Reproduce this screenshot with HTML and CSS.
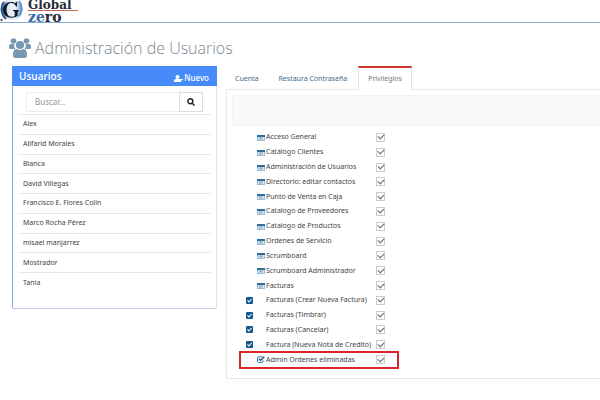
FILE: index.html
```html
<!DOCTYPE html>
<html lang="es">
<head>
<meta charset="utf-8">
<title>Administración de Usuarios</title>
<link rel="stylesheet" href="styles.css">
</head>
<body>
<svg class="defs" aria-hidden="true">
  <symbol id="window" viewBox="0 0 8 7"><rect y="1" width="8" height="6" fill="#9dbbd0"/><rect y="1" width="8" height="2" fill="#2f6d9b"/><rect x="1" y="3" width="6" height="3" fill="#d5e4ee"/><path d="M2 4h4M2 5h3" stroke="#5689ad" stroke-width=".6"/></symbol>
  <symbol id="square-check" viewBox="0 0 7 7"><rect width="7" height="7" rx="1" fill="#17588c"/><path d="M1.500 3.400 3 5 5.600 2" fill="none" stroke="#fff" stroke-width="1.100"/></symbol>
  <symbol id="check-edit" viewBox="0 0 8 7"><path d="M5.500.8H1.300Q.6.8.6 1.500v4q0 .8.7.8h4q.8 0 .8-.8V4.300" fill="none" stroke="#2f6d9b"/><path d="M2 2.800 3.500 4.300 7.300.8" fill="none" stroke="#17588c" stroke-width="1.300"/></symbol>
</svg>
<header class="topbar">
  <svg class="emblem" viewBox="0 0 24 22" role="img" aria-label="Global Zero">
    <defs><linearGradient id="globe"><stop offset="0" stop-color="#2d63a6"/><stop offset=".3" stop-color="#dce9f5"/><stop offset=".65" stop-color="#eef5fb"/><stop offset="1" stop-color="#5f93cb"/></linearGradient></defs>
    <circle cx="12" cy="9.500" r="10.500" fill="url(#globe)"/>
    <path d="M4 2C0 6 1 15 6 19" fill="none" stroke="#24599c" stroke-width="2"/>
    <path d="M19 1c3 4 4 10 0 15" fill="none" stroke="#5f93cb" stroke-width="2"/>
    <path d="M17 6.500h-1C15 4 13.500 3 11.500 3 8.500 3 6.500 5.500 6.500 9.700s2 7 5 7c1.500 0 2.500-.4 3.200-1v-3.500q0-1.200-1.700-1.200v-.9h6v.9q-1.300 0-1.300 1.200v3.600c-1.600 1.200-3.700 1.900-6.200 1.900C6.800 17.700 3 14.800 3 10s3.600-8 8.300-8c1.700 0 3 .6 4 1l.8-.9h.9z" fill="#151a25"/>
    <circle cx="1.500" cy="20" r="1" fill="#222"/>
  </svg>
  <div class="brand">
    <span class="brand-top">Global</span>
    <span class="brand-bottom"><span class="brand-blue">ze</span>ro</span>
  </div>
</header>
<h1 class="title">
  <svg class="users" viewBox="0 0 22 20" aria-hidden="true" fill="#7698b3"><circle cx="4.500" cy="3" r="2.800"/><circle cx="17.500" cy="3" r="2.800"/><path d="M0 10V8q0-2 2-2h3.500Q4.500 9 6.500 11H1Q0 11 0 10M22 10V8q0-2-2-2h-3.500q1 3-1 5H21q1 0 1-1"/><circle cx="11" cy="7" r="4.100"/><path d="M4 17q0-6 3.500-6 3.500 2.200 7 0Q18 11 18 17q0 3-2.500 3h-9Q4 20 4 17"/></svg>
  Administración de Usuarios
</h1>
<main class="layout">
  <section class="panel">
    <div class="panel-head">
      <h2>Usuarios</h2>
      <button class="new" type="button"><svg class="person" viewBox="0 0 9 7" aria-hidden="true" fill="#fff"><circle cx="3.500" cy="2" r="2"/><path d="M0 7V5.500Q0 4 2 4h3q2 0 2 1.500V7zM5 4h4v1.300H5z"/></svg>Nuevo</button>
    </div>
    <form class="search">
      <input type="text" placeholder="Buscar..." aria-label="Buscar usuario">
      <button type="button" aria-label="Buscar"><svg viewBox="0 0 8 8" fill="none" stroke="#222" stroke-width="1.400"><circle cx="3.300" cy="3.300" r="2.500"/><path d="m5 5 2.600 2.600"/></svg></button>
    </form>
    <ul class="people">
      <li>Alex</li><li>Allfarid Morales</li><li>Blanca</li><li>David Villegas</li><li>Francisco E. Flores Colin</li><li>Marco Rocha Pérez</li><li>misael manjarrez</li><li>Mostrador</li><li>Tania</li>
    </ul>
  </section>
  <section class="detail">
    <nav class="tabs">
      <a href="#cuenta">Cuenta</a><a href="#restaura">Restaura Contraseña</a><a class="active" href="#privilegios" aria-current="page">Privilegios</a>
    </nav>
    <div class="tab-body">
      <div class="strip"></div>
      <ul class="privileges">
        <li><svg class="icon"><use href="#window"/></svg><label for="p1">Acceso General</label><input id="p1" type="checkbox" checked></li>
        <li><svg class="icon"><use href="#window"/></svg><label for="p2">Catálogo Clientes</label><input id="p2" type="checkbox" checked></li>
        <li><svg class="icon"><use href="#window"/></svg><label for="p3">Administración de Usuarios</label><input id="p3" type="checkbox" checked></li>
        <li><svg class="icon"><use href="#window"/></svg><label for="p4">Directorio: editar contactos</label><input id="p4" type="checkbox" checked></li>
        <li><svg class="icon"><use href="#window"/></svg><label for="p5">Punto de Venta en Caja</label><input id="p5" type="checkbox" checked></li>
        <li><svg class="icon"><use href="#window"/></svg><label for="p6">Catalogo de Proveedores</label><input id="p6" type="checkbox" checked></li>
        <li><svg class="icon"><use href="#window"/></svg><label for="p7">Catalogo de Productos</label><input id="p7" type="checkbox" checked></li>
        <li><svg class="icon"><use href="#window"/></svg><label for="p8">Ordenes de Servicio</label><input id="p8" type="checkbox" checked></li>
        <li><svg class="icon"><use href="#window"/></svg><label for="p9">Scrumboard</label><input id="p9" type="checkbox" checked></li>
        <li><svg class="icon"><use href="#window"/></svg><label for="p10">Scrumboard Administrador</label><input id="p10" type="checkbox" checked></li>
        <li><svg class="icon"><use href="#window"/></svg><label for="p11">Facturas</label><input id="p11" type="checkbox" checked></li>
        <li><svg class="icon outer"><use href="#square-check"/></svg><label for="p12">Facturas (Crear Nueva Factura)</label><input id="p12" type="checkbox" checked></li>
        <li><svg class="icon outer"><use href="#square-check"/></svg><label for="p13">Facturas (Timbrar)</label><input id="p13" type="checkbox" checked></li>
        <li><svg class="icon outer"><use href="#square-check"/></svg><label for="p14">Facturas (Cancelar)</label><input id="p14" type="checkbox" checked></li>
        <li><svg class="icon outer"><use href="#square-check"/></svg><label for="p15">Factura (Nueva Nota de Credito)</label><input id="p15" type="checkbox" checked></li>
        <li class="marked"><svg class="icon"><use href="#check-edit"/></svg><label for="p16">Admin Ordenes eliminadas</label><input id="p16" type="checkbox" checked></li>
      </ul>
    </div>
  </section>
</main>
</body>
</html>
```
FILE: styles.css
```css
* { box-sizing: border-box; }
body { margin: 0; background: #fff; color: #444; font: 7px/10px "Noto Sans", "Open Sans", sans-serif; }
h1, h2, ul { margin: 0; padding: 0; list-style: none; }
button, input { font: inherit; margin: 0; padding: 0; }
button { border: 0; background: none; cursor: pointer; }
.defs { display: none; }

.topbar { display: flex; gap: 4px; height: 23px; border-bottom: 1px solid #86acd3; }
.emblem { width: 24px; height: 22px; }
.brand { display: flex; flex-direction: column; min-width: 50px; font-family: "DejaVu Serif", serif; font-weight: bold; color: #252d3a; }
.brand-top { font-size: 12px; line-height: 10px; border-bottom: 1px solid #cd6256; }
.brand-bottom { padding-top: 1px; font-size: 14px; line-height: 10px; }
.brand-blue { color: #3c68a5; }

.title { display: flex; align-items: center; gap: 4px; height: 24px; margin: 13px 0 6px 9px; font: 300 16px/24px "Open Sans", sans-serif; color: #7b8791; }
.users { width: 22px; height: 20px; }

.layout { display: grid; grid-template-columns: 205px 1fr; gap: 9px; padding-left: 12px; align-items: start; }
.panel { border: 1px solid #e2e4ea; border-top: 0; border-left-color: #7ba8f3; border-bottom-color: #c4cbe0; border-radius: 0 0 2px 2px; padding-bottom: 16px; }
.panel-head { display: flex; justify-content: space-between; align-items: flex-end; height: 20px; margin: 0 -1px; padding: 0 8px 3px 7px; background: #478bf9; color: #fff; }
.panel-head h2 { font: 600 10px/14px "Open Sans", sans-serif; }
.new { display: flex; align-items: center; gap: 1px; color: #fff; font-size: 8px; line-height: 10px; font-weight: 500; }
.person { width: 9px; height: 7px; }
.search { display: flex; height: 20px; margin: 6px 13px 2px; }
.search input { flex: 1; min-width: 0; padding-left: 8px; border: 1px solid #eee; font-size: 8px; color: #444; }
.search input::placeholder { color: #999; }
.search button { display: flex; align-items: center; justify-content: center; width: 24px; border: 1px solid #ddd; margin-left: -1px; }
.search svg { width: 8px; height: 8px; }
.people { display: grid; grid-auto-rows: 1fr; height: 178px; margin: 0 5px; }
.people li { display: flex; align-items: center; padding-left: 5px; border-top: 1px solid #e8e8e8; }

.tabs { display: flex; gap: 2px; height: 24px; border-bottom: 1px solid #e8e8e8; }
.tabs a { display: flex; align-items: center; padding: 0 8px; border: 1px solid transparent; border-top: 2px solid transparent; color: #3a6b90; text-decoration: none; margin-bottom: -1px; }
.tabs .active { padding: 0 9px; border-color: #cf3428 #e4e4e4 #fff; color: #777; background: #fff; }
.tab-body { padding: 5px 0 11px 5px; border: 1px solid #e8e8e8; border-top: 0; border-right: 0; }
.strip { height: 31px; background: #f9f9f9; border: 1px solid #f3f3f3; border-right: 0; margin-bottom: 4px; }
.privileges { display: grid; grid-auto-rows: 1fr; height: 237px; margin-left: 14px; }
.privileges li { position: relative; display: grid; grid-template-columns: 20px 110px 10px; align-items: center; width: 140px; }
.privileges label { white-space: nowrap; }
.icon { width: 8px; height: 7px; justify-self: end; margin-right: 1px; }
.icon.outer { justify-self: start; width: 7px; }
.privileges input { appearance: none; width: 9px; height: 9px; border: 1px solid #ccc; background: #fff; display: grid; place-items: center; }
.privileges input:checked::after { content: ""; width: 5px; height: 3px; margin-bottom: 2px; border: solid #666; border-width: 0 0 1px 1px; transform: rotate(-45deg); }
.marked::after { content: ""; position: absolute; inset: -1px -13px -2px -7px; border: 2px solid #dc252b; pointer-events: none; }
```
